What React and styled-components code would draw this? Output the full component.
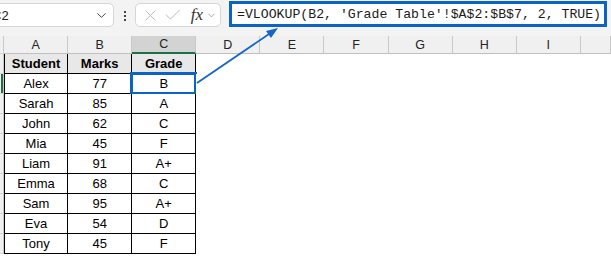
import React from 'react';
import styled, { createGlobalStyle } from 'styled-components';
import { ChevronDown, X, Check } from 'lucide-react';

const GlobalStyle = createGlobalStyle`
  body {
    margin: 0;
    background: #ffffff;
    font-family: "Liberation Sans", Arial, sans-serif;
    overflow: hidden;
  }
`;

const Page = styled.div`
  position: relative;
  width: 611px;
  height: 278px;
  overflow: hidden;
  background: #fff;
`;

const Toolbar = styled.div`
  display: flex;
  align-items: flex-start;
  height: 36px;
  background: #f3f3f3;
`;

const NameBox = styled.div`
  display: flex;
  align-items: center;
  justify-content: space-between;
  box-sizing: border-box;
  width: 126px;
  height: 24px;
  margin: 3px 0 0 -12px;
  padding: 0 4px 0 3px;
  background: #fff;
  border: 1px solid #d6d6d6;
  border-radius: 5px;
  font-size: 13px;
  color: #222;
`;

const Dots = styled.div`
  display: flex;
  flex-direction: column;
  gap: 2px;
  margin: 11px 9px 0 10px;
  span {
    width: 2px;
    height: 2px;
    background: #444;
  }
`;

const FxBox = styled.div`
  display: flex;
  align-items: center;
  gap: 3px;
  box-sizing: border-box;
  width: 86px;
  height: 24px;
  margin-top: 3px;
  padding: 0 3px 0 5px;
  background: #fff;
  border: 1px solid #d6d6d6;
  border-radius: 5px;
  color: #b9b9b9;
`;

const Fx = styled.span`
  margin-left: 5px;
  font-family: "Liberation Serif", serif;
  font-style: italic;
  font-size: 17px;
  color: #333;
`;

const FormulaInput = styled.div`
  flex: 1;
  box-sizing: border-box;
  height: 26px;
  margin: 1px 4px 0 8px;
  padding: 0 0 0 5px;
  background: #fff;
  border: 3px solid #0b63c4;
  display: flex;
  align-items: center;
  font-family: "Liberation Mono", "DejaVu Sans Mono", monospace;
  font-size: 13.2px;
  color: #1a1a1a;
  white-space: nowrap;
`;

const Row = styled.div`
  display: grid;
  grid-template-columns: 4px repeat(9, 64.1px) 1fr;
  height: ${(p) => p.$h}px;
`;

const RowHead = styled.div`
  box-sizing: border-box;
  background: #f0f0f0;
  border-right: 1px solid #c8c8c8;
  border-bottom: 1px solid #d4d4d4;
  box-shadow: ${(p) => (p.$active ? 'inset -2px 0 0 #1e6e42' : 'none')};
`;

const ColHead = styled.div`
  box-sizing: border-box;
  display: flex;
  align-items: center;
  justify-content: center;
  font-size: 12.5px;
  color: #222;
  background: ${(p) => (p.$active ? '#d3d3d3' : '#f0f0f0')};
  border-right: 1px solid #c8c8c8;
  border-bottom: ${(p) => (p.$active ? '2px solid #1e7145' : '1px solid #c0c0c0')};
`;

const Cell = styled.div`
  position: relative;
  box-sizing: border-box;
  display: flex;
  align-items: center;
  justify-content: center;
  font-size: 13px;
  color: #000;
  font-weight: ${(p) => (p.$head ? 700 : 400)};
  background: ${(p) => (p.$head ? '#e8e8e8' : '#fff')};
  border-right: ${(p) => (p.$table ? '1px solid #000' : 'none')};
  border-bottom: ${(p) => (p.$table ? '1px solid #000' : 'none')};
  border-left: ${(p) => (p.$first ? '1px solid #000' : 'none')};
`;

const Selection = styled.div`
  position: absolute;
  left: -2px;
  top: -2px;
  right: -2px;
  bottom: -2px;
  border: 3px solid #0b63c4;
  pointer-events: none;
  &::after {
    content: '';
    position: absolute;
    right: -4px;
    bottom: -4px;
    width: 4px;
    height: 4px;
    background: #1e7145;
  }
`;

const Arrow = styled.svg`
  position: absolute;
  left: 0;
  top: 0;
  pointer-events: none;
`;

const cols = ['A', 'B', 'C', 'D', 'E', 'F', 'G', 'H', 'I', ''];

const data = [
  ['Student', 'Marks', 'Grade'],
  ['Alex', '77', 'B'],
  ['Sarah', '85', 'A'],
  ['John', '62', 'C'],
  ['Mia', '45', 'F'],
  ['Liam', '91', 'A+'],
  ['Emma', '68', 'C'],
  ['Sam', '95', 'A+'],
  ['Eva', '54', 'D'],
  ['Tony', '45', 'F'],
];

export default function App() {
  return (
    <Page>
      <GlobalStyle />
      <Toolbar>
        <NameBox>
          <span>C2</span>
          <ChevronDown size={15} color="#444" strokeWidth={1.6} />
        </NameBox>
        <Dots>
          <span />
          <span />
          <span />
        </Dots>
        <FxBox>
          <X size={19} strokeWidth={1.2} />
          <Check size={20} strokeWidth={1.2} />
          <Fx>fx</Fx>
          <ChevronDown size={11} strokeWidth={1.6} color="#888" />
        </FxBox>
        <FormulaInput>=VLOOKUP(B2, 'Grade Table'!$A$2:$B$7, 2, TRUE)</FormulaInput>
      </Toolbar>

      <Row $h={18}>
        <RowHead />
        {cols.map((c, i) => (
          <ColHead key={i} $active={c === 'C'}>
            {c}
          </ColHead>
        ))}
      </Row>

      {data.map((r, ri) => (
        <Row key={ri} $h={20}>
          <RowHead $active={ri === 1} />
          {r.map((v, ci) => (
            <Cell key={ci} $table $head={ri === 0} $first={ci === 0}>
              {v}
              {ri === 1 && ci === 2 && <Selection />}
            </Cell>
          ))}
          {cols.slice(3).map((c, ci) => (
            <Cell key={'e' + ci} />
          ))}
        </Row>
      ))}

      <Arrow width="611" height="278" viewBox="0 0 611 278">
        <line x1="197" y1="83" x2="272" y2="32" stroke="#1565c8" strokeWidth="1.8" />
        <polygon points="278,28 266,31 271,38" fill="#1565c8" />
      </Arrow>
    </Page>
  );
}
